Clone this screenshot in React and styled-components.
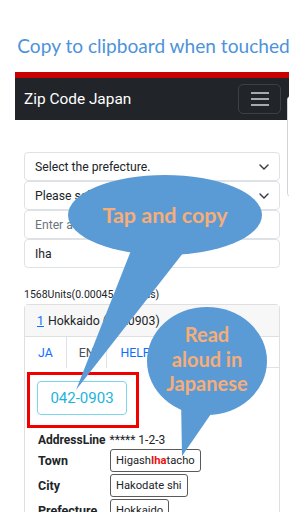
import React from "react";
import styled, { createGlobalStyle } from "styled-components";

const GlobalStyle = createGlobalStyle`
    html, body {
        margin: 0;
        padding: 0;
        background: #ffffff;
    }
    body {
        font-family: Roboto, "Liberation Sans", sans-serif;
        color: #212529;
    }
`;

const Page = styled.div`
    position: relative;
    width: 307px;
    height: 512px;
    overflow: hidden;
    background: #ffffff;
`;

const Headline = styled.div`
    padding-top: 34px;
    height: 72px;
    box-sizing: border-box;
    text-align: center;
    font-family: Lato, "Open Sans", sans-serif;
    font-size: 19.1px;
    line-height: 24px;
    color: #4d93da;
    white-space: nowrap;
`;

const Phone = styled.div`
    position: relative;
    margin-left: 15px;
    width: 274px;
    height: 440px;
    overflow: hidden;
    background: #ffffff;
`;

const TopStripe = styled.div`
    height: 6px;
    background: #c80000;
`;

const Navbar = styled.div`
    height: 42px;
    background: #212529;
    display: flex;
    align-items: center;
    justify-content: space-between;
    padding: 0 8px 0 9px;
`;

const Brand = styled.span`
    color: #ffffff;
    font-size: 15.4px;
`;

const Toggler = styled.div`
    width: 43px;
    height: 30px;
    box-sizing: border-box;
    border: 1px solid rgba(255, 255, 255, 0.12);
    border-radius: 5px;
    display: flex;
    flex-direction: column;
    justify-content: center;
    align-items: center;
    gap: 4px;
`;

const TogglerLine = styled.span`
    width: 18px;
    height: 2px;
    background: #a8a9aa;
`;

const EdgePanel = styled.div`
    position: absolute;
    top: 23px;
    left: 272px;
    width: 20px;
    height: 103px;
    box-sizing: border-box;
    background: #ffffff;
    border: 1px solid #d4d4d4;
    border-radius: 5px;
`;

const Content = styled.div`
    padding: 32px 9px 0 9px;
`;

const Control = styled.div`
    height: 29px;
    box-sizing: border-box;
    border: 1px solid #dee2e6;
    border-radius: 4px;
    display: flex;
    align-items: center;
    justify-content: space-between;
    padding: 0 10px 0 10px;
    font-size: 12.2px;
    color: ${(p) => (p.$placeholder ? "#6c757d" : "#212529")};
`;

const Count = styled.div`
    margin-top: 19px;
    font-size: 10.5px;
    line-height: 16px;
    color: #212529;
`;

const Card = styled.div`
    margin-top: 1px;
    border: 1px solid #dfdfdf;
    border-radius: 4px;
    height: 220px;
`;

const CardHeader = styled.div`
    height: 32px;
    box-sizing: border-box;
    background: #f7f7f7;
    border-bottom: 1px solid #dfdfdf;
    display: flex;
    align-items: center;
    padding-left: 12px;
    font-size: 12.3px;
`;

const NumLink = styled.span`
    color: #0d6efd;
    text-decoration: underline;
    margin-right: 4px;
`;

const TabBar = styled.div`
    display: flex;
    height: 31px;
    box-sizing: border-box;
    border-bottom: 1px solid #dee2e6;
`;

const Tab = styled.div`
    height: 31px;
    box-sizing: border-box;
    padding: 0 12px;
    display: flex;
    align-items: center;
    font-size: 12.3px;
    color: ${(p) => (p.$active ? "#495057" : "#0d6efd")};
    background: #ffffff;
    border-left: 1px solid ${(p) => (p.$active ? "#dee2e6" : "transparent")};
    border-right: 1px solid ${(p) => (p.$active ? "#dee2e6" : "transparent")};
`;

const CardBody = styled.div`
    padding: 13px 12px 0 12px;
`;

const CopyWrap = styled.div`
    position: relative;
    width: 90px;
`;

const ZipButton = styled.div`
    width: 90px;
    height: 34px;
    box-sizing: border-box;
    border: 1px solid #79d7ec;
    border-radius: 4px;
    display: flex;
    align-items: center;
    justify-content: center;
    font-size: 15px;
    color: #1cb4dc;
`;

const RedFrame = styled.div`
    position: absolute;
    left: -10px;
    top: -9px;
    width: 112px;
    height: 56px;
    box-sizing: border-box;
    border: 3px solid #f20000;
`;

const AddressLine = styled.div`
    margin-top: 16px;
    margin-left: 1px;
    font-size: 12px;
    line-height: 18px;
`;

const Bold = styled.b`
    font-weight: 700;
    margin-right: 4px;
`;

const Fields = styled.div`
    display: grid;
    grid-template-columns: 72px auto;
    row-gap: 2px;
    margin-left: 1px;
    justify-items: start;
`;

const Label = styled.div`
    font-size: 12.5px;
    font-weight: 700;
    height: 23px;
    display: flex;
    align-items: center;
`;

const ValueBox = styled.div`
    height: 23px;
    box-sizing: border-box;
    border: 1px solid #5a5a5a;
    border-radius: 3px;
    padding: 0 5px;
    display: flex;
    align-items: center;
    font-size: 11.2px;
`;

const Hit = styled.span`
    color: #ee1111;
    font-weight: 700;
`;

const Overlay = styled.svg`
    position: absolute;
    left: 0;
    top: 0;
    pointer-events: none;
`;

const BubbleText = styled.text`
    font-family: Lato, "Open Sans", sans-serif;
    font-weight: 700;
    font-size: ${(p) => p.$size || 20}px;
    fill: #f6ad78;
`;

function Chevron() {
    return (
        <svg width="10" height="6" viewBox="0 0 10 6">
            <path d="M1 1l4 4 4-4" fill="none" stroke="#343a40" strokeWidth="1.4" strokeLinecap="round" />
        </svg>
    );
}

export default function App() {
    return (
        <Page>
            <GlobalStyle />
            <Headline>Copy to clipboard when touched</Headline>
            <Phone>
                <TopStripe />
                <Navbar>
                    <Brand>Zip Code Japan</Brand>
                    <Toggler>
                        <TogglerLine />
                        <TogglerLine />
                        <TogglerLine />
                    </Toggler>
                </Navbar>
                <EdgePanel />
                <Content>
                    <Control>
                        <span>Select the prefecture.</span>
                        <Chevron />
                    </Control>
                    <Control>
                        <span>Please select the city.</span>
                        <Chevron />
                    </Control>
                    <Control $placeholder>
                        <span>Enter address</span>
                    </Control>
                    <Control>
                        <span>Iha</span>
                    </Control>
                    <Count>1568Units(0.00045 seconds)</Count>
                    <Card>
                        <CardHeader>
                            <NumLink>1</NumLink>Hokkaido (0420903)
                        </CardHeader>
                        <TabBar>
                            <Tab>JA</Tab>
                            <Tab $active>EN</Tab>
                            <Tab>HELP</Tab>
                        </TabBar>
                        <CardBody>
                            <CopyWrap>
                                <ZipButton>042-0903</ZipButton>
                                <RedFrame />
                            </CopyWrap>
                            <AddressLine>
                                <Bold>AddressLine</Bold>***** 1-2-3
                            </AddressLine>
                            <Fields>
                                <Label>Town</Label>
                                <ValueBox>
                                    Higash<Hit>Iha</Hit>tacho
                                </ValueBox>
                                <Label>City</Label>
                                <ValueBox>Hakodate shi</ValueBox>
                                <Label>Prefecture</Label>
                                <ValueBox>Hokkaido</ValueBox>
                            </Fields>
                        </CardBody>
                    </Card>
                </Content>
            </Phone>
            <Overlay width="307" height="512" viewBox="0 0 307 512">
                <ellipse cx="165" cy="215" rx="97" ry="40" fill="#5b9bd5" />
                <polygon points="132,248 187,248 76,390" fill="#5b9bd5" />
                <BubbleText x="165" y="223" textAnchor="middle" $size={21.5}>Tap and copy</BubbleText>
                <ellipse cx="207" cy="361" rx="60" ry="54" fill="#5b9bd5" />
                <polygon points="181,398 222,398 182,456" fill="#5b9bd5" />
                <BubbleText x="207" y="342" textAnchor="middle">Read</BubbleText>
                <BubbleText x="207" y="367" textAnchor="middle">aloud in</BubbleText>
                <BubbleText x="207" y="391" textAnchor="middle">Japanese</BubbleText>
            </Overlay>
        </Page>
    );
}
